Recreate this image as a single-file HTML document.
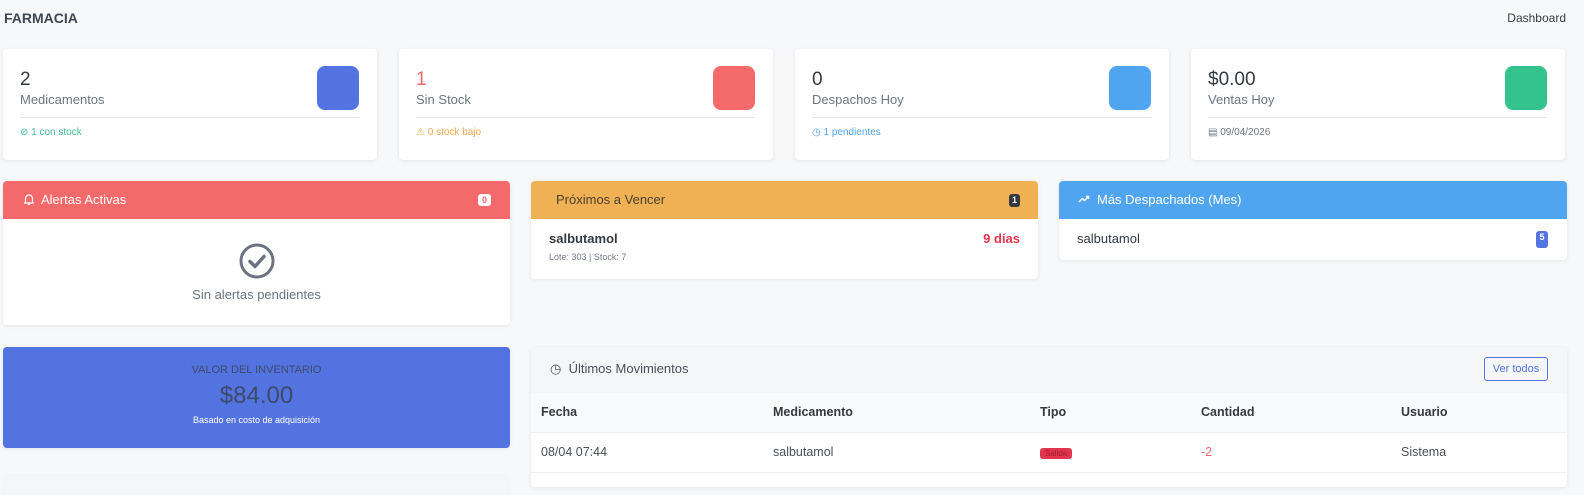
<!DOCTYPE html>
<html><head><meta charset="utf-8"><style>
*{box-sizing:border-box;margin:0;padding:0}
body{width:1584px;height:484px;overflow:hidden;background:#f7f8fa;font-family:"Liberation Sans",sans-serif;color:#495057;position:relative}
.abs{position:absolute}
.card{position:absolute;background:#fff;border-radius:4px;box-shadow:0 1px 4px rgba(0,0,0,.08)}
.stat .num{position:absolute;left:17px;top:20px;font-size:19px;color:#343a40}
.stat .lbl{position:absolute;left:17px;top:43px;font-size:13px;color:#6c757d}
.stat .ic{position:absolute;right:18px;top:17px;width:42px;height:44px;border-radius:8px}
.stat hr{position:absolute;left:17px;right:18px;top:68px;border:0;border-top:1px solid #e3e6ea}
.stat .ft{position:absolute;left:17px;top:78px;font-size:10px}
.hdr{position:absolute;left:0;right:0;top:0;height:38px;color:#fff;font-size:13px;line-height:38px;padding-left:18px}
.badge{position:absolute;font-size:9px;font-weight:bold;border-radius:3px;text-align:center}
th{text-align:left;font-size:12.5px;font-weight:bold;color:#343a40;height:39px;padding-left:10px;background:#f9fafb;border-bottom:1px solid #eceef1}
td{font-size:12.5px;color:#495057;height:40px;padding-left:10px;border-bottom:1px solid #eceef1}
</style></head><body>
<div class="abs" style="left:4px;top:10px;font-size:14px;font-weight:bold;color:#3f4752">FARMACIA</div>
<div class="abs" style="right:18px;top:11px;font-size:12px;color:#343a40">Dashboard</div>

<div class="card stat" style="left:3px;top:49px;width:374px;height:111px">
<div class="num">2</div><div class="lbl">Medicamentos</div><div class="ic" style="background:#5273e0"></div><hr><div class="ft" style="color:#3cbf8f">⊘ 1 con stock</div></div>
<div class="card stat" style="left:399px;top:49px;width:374px;height:111px">
<div class="num" style="color:#f06a6a">1</div><div class="lbl">Sin Stock</div><div class="ic" style="background:#f46a6a"></div><hr><div class="ft" style="color:#f1a64e">⚠ 0 stock bajo</div></div>
<div class="card stat" style="left:795px;top:49px;width:374px;height:111px">
<div class="num">0</div><div class="lbl">Despachos Hoy</div><div class="ic" style="background:#50a5f1"></div><hr><div class="ft" style="color:#50a5f1">◷ 1 pendientes</div></div>
<div class="card stat" style="left:1191px;top:49px;width:374px;height:111px">
<div class="num">$0.00</div><div class="lbl">Ventas Hoy</div><div class="ic" style="background:#34c38f"></div><hr><div class="ft" style="color:#6c757d">▤ 09/04/2026</div></div>

<div class="card" style="left:3px;top:181px;width:507px;height:144px;overflow:hidden">
<div class="hdr" style="background:#f46a6a;padding-left:38px">Alertas Activas</div>
<svg class="abs" style="left:20px;top:12px" width="12" height="13" viewBox="0 0 12 13"><path d="M2.5 9V5.5a3.5 3.5 0 0 1 7 0V9l1 1H1.5z M4.8 11.3h2.4" fill="none" stroke="#fff" stroke-width="1.2" stroke-linejoin="round"/></svg>
<div class="badge" style="right:19px;top:13px;width:13px;height:12px;background:#fff;color:#f46a6a;line-height:12px">0</div>
<svg class="abs" style="left:236px;top:62px" width="36" height="36" viewBox="0 0 36 36"><circle cx="18" cy="18" r="16" fill="none" stroke="#6c7280" stroke-width="3"/><path d="M11 18.5l5 5 9-10" fill="none" stroke="#6c7280" stroke-width="3.5" stroke-linecap="round" stroke-linejoin="round"/></svg>
<div class="abs" style="left:0;right:0;top:106px;text-align:center;font-size:13px;color:#6c757d">Sin alertas pendientes</div>
</div>

<div class="card" style="left:531px;top:181px;width:507px;height:98px;overflow:hidden">
<div class="hdr" style="background:#f0b154;color:#4a4030;padding-left:25px">Próximos a Vencer</div>
<div class="badge" style="right:18px;top:13px;width:11px;height:13px;background:#343a40;color:#fff;line-height:13px">1</div>
<div class="abs" style="left:18px;top:50px;font-size:13px;font-weight:bold;color:#343a40">salbutamol</div>
<div class="abs" style="right:18px;top:50px;font-size:13px;font-weight:bold;color:#e0354a">9 días</div>
<div class="abs" style="left:18px;top:71px;font-size:9px;color:#74788d">Lote: 303 | Stock: 7</div>
</div>

<div class="card" style="left:1059px;top:181px;width:508px;height:79px;overflow:hidden">
<div class="hdr" style="background:#50a5f1;padding-left:38px">Más Despachados (Mes)</div>
<svg class="abs" style="left:19px;top:14px" width="12" height="9" viewBox="0 0 12 9"><path d="M1 7l3.5-3.5 2 2L10.5 1.5 M8 1.5h2.5V4" fill="none" stroke="#fff" stroke-width="1.4"/></svg>
<div class="abs" style="left:18px;top:50px;font-size:13px;color:#343a40">salbutamol</div>
<div class="badge" style="right:19px;top:50px;width:12px;height:17px;background:#5273e0;color:#fff;line-height:12px">5</div>
</div>

<div class="card" style="left:3px;top:347px;width:507px;height:101px;background:#5273e0;text-align:center">
<div class="abs" style="left:0;right:0;top:17px;font-size:11px;color:#3e4a6a">VALOR DEL INVENTARIO</div>
<div class="abs" style="left:0;right:0;top:35px;font-size:24px;color:#3e4a6a">$84.00</div>
<div class="abs" style="left:0;right:0;top:68px;font-size:9px;color:#fff">Basado en costo de adquisición</div>
</div>
<div class="card" style="left:3px;top:475px;width:507px;height:20px;background:#f5f6f8;box-shadow:0 0 2px rgba(0,0,0,.04)"></div>

<div class="card" style="left:531px;top:347px;width:1036px;height:140px;overflow:hidden">
<div class="abs" style="left:0;right:0;top:0;height:46px;background:#f5f6f8"></div>
<div class="abs" style="left:19px;top:14px;font-size:13px;color:#495057">◷&nbsp; Últimos Movimientos</div>
<div class="abs" style="right:19px;top:10px;width:64px;height:24px;border:1px solid #5273e0;border-radius:3px;color:#5273e0;font-size:11px;text-align:center;line-height:22px">Ver todos</div>
<table class="abs" style="left:0;top:46px;width:1036px;border-collapse:collapse">
<tr><th style="width:232px">Fecha</th><th style="width:267px">Medicamento</th><th style="width:161px">Tipo</th><th style="width:200px">Cantidad</th><th>Usuario</th></tr>
<tr><td>08/04 07:44</td><td>salbutamol</td><td><span style="background:#e0354a;color:#a01f2c;font-size:8px;border-radius:3px;padding:1px 5px">Salida</span></td><td style="color:#f46a6a">-2</td><td>Sistema</td></tr>
</table>
</div>
</body></html>
